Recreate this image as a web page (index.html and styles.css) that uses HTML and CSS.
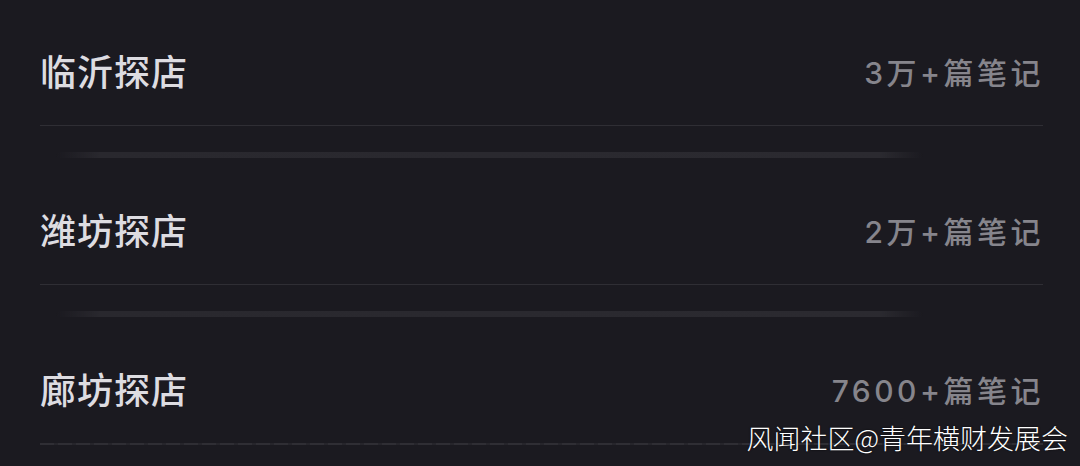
FILE: index.html
```html
<!DOCTYPE html>
<html lang="zh-CN">
<head>
<meta charset="utf-8">
<title>探店</title>
<link rel="stylesheet" href="styles.css">
</head>
<body>
<div class="page">
  <ul class="list">
    <li class="row">
      <div class="head"><span class="title">临沂探店</span><span class="count">3万+篇笔记</span></div>
      <div class="divider"></div>
      <div class="shadow-bar"></div>
    </li>
    <li class="row">
      <div class="head"><span class="title">潍坊探店</span><span class="count">2万+篇笔记</span></div>
      <div class="divider"></div>
      <div class="shadow-bar"></div>
    </li>
    <li class="row">
      <div class="head"><span class="title">廊坊探店</span><span class="count">7600+篇笔记</span></div>
      <div class="divider dashed"></div>
      <div class="shadow-bar"></div>
    </li>
  </ul>
  <div class="watermark">风闻社区@青年横财发展会</div>
</div>
</body>
</html>
```
FILE: styles.css
```css
html, body {
  margin: 0;
  padding: 0;
  background: #1b1a20;
  height: 100%;
  overflow: hidden;
}
.page {
  position: relative;
  width: 1080px;
  height: 466px;
  overflow: hidden;
  font-family: "Noto Sans CJK SC", "Noto Sans", sans-serif;
}
.list {
  list-style: none;
  margin: 0;
  padding: 45px 37px 0 40px;
}
.row {
  display: flex;
  flex-direction: column;
  margin-bottom: 46px;
}
.head {
  height: 50px;
  display: flex;
  align-items: center;
  justify-content: space-between;
  margin-bottom: 30px;
}
.title {
  font-size: 36px;
  font-weight: 500;
  color: #dddce1;
  letter-spacing: 1px;
}
.count {
  font-family: Inter, "Noto Sans CJK SC", sans-serif;
  font-size: 30px;
  font-weight: 500;
  color: #86858c;
  letter-spacing: 3.5px;
  margin-right: -1px;
  padding-top: 2px;
}
.divider {
  height: 1px;
  background: #2f2e34;
}
.divider.dashed {
  background: repeating-linear-gradient(90deg, #2f2e34 0 14px, #26252b 14px 18px);
  height: 2px;
}
.shadow-bar {
  margin: 26px 120px 0 16px;
  height: 6px;
  border-radius: 3px;
  background: linear-gradient(90deg, rgba(44,43,49,0) 0%, #29282e 5%, #2b2a30 95%, rgba(44,43,49,0) 100%);
  filter: blur(0.6px);
}
.watermark {
  position: absolute;
  right: 12px;
  bottom: 11px;
  font-family: "Noto Sans CJK SC", sans-serif;
  font-weight: 300;
  font-size: 27px;
  line-height: 34px;
  color: #ffffff;
  text-shadow: 0 0 2px rgba(0,0,0,0.8);
}
```
